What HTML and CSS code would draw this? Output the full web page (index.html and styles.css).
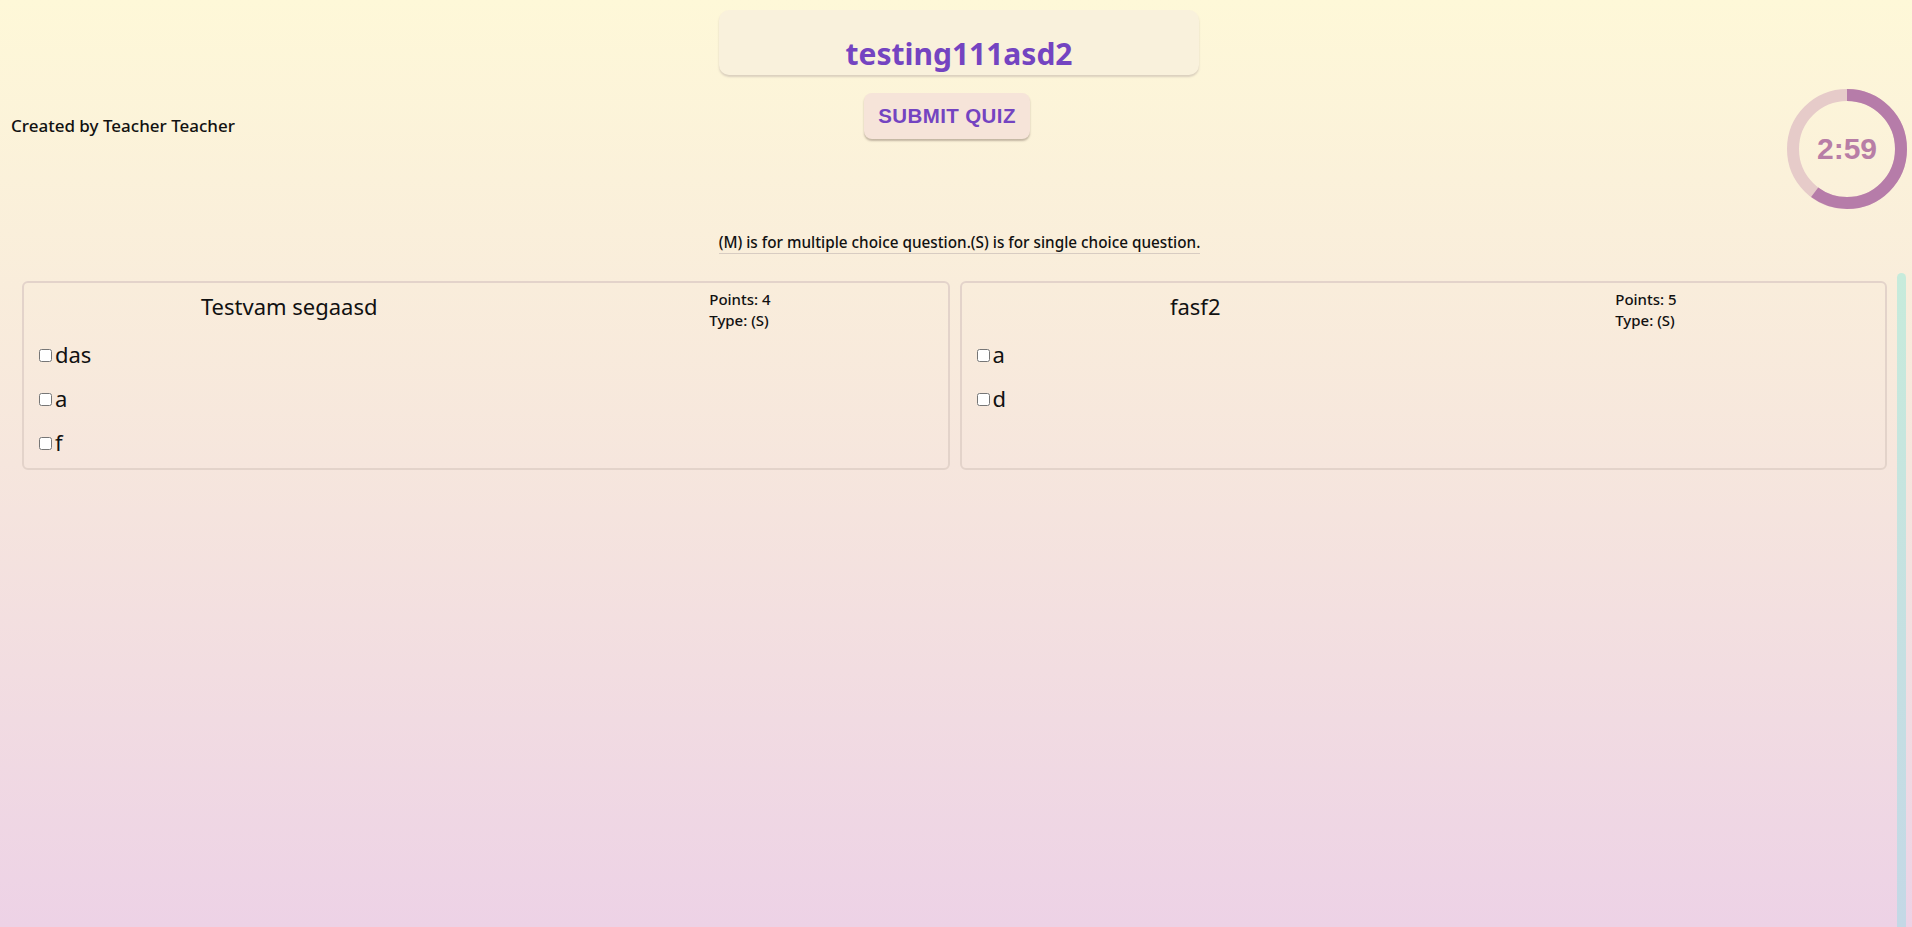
FILE: index.html
```html
<!DOCTYPE html>
<html lang="en">
<head>
<meta charset="utf-8">
<title>Quiz</title>
<link rel="stylesheet" href="styles.css">
</head>
<body>
<header class="top">
  <div class="author">Created by Teacher Teacher</div>
  <div class="center">
    <div class="title-box"><h1 class="title">testing111asd2</h1></div>
    <button class="submit">SUBMIT QUIZ</button>
  </div>
  <div class="timer">
    <svg class="ring" width="120" height="120" viewBox="0 0 120 120">
      <circle cx="60" cy="60" r="54" fill="none" stroke="#e6cbc9" stroke-width="12"/>
      <circle cx="60" cy="60" r="54" fill="none" stroke="#b67ca9" stroke-width="12" stroke-dasharray="204 340" transform="rotate(-90 60 60)"/>
    </svg>
    <span class="time">2:59</span>
  </div>
</header>
<p class="legend"><span class="legend-text">(M) is for multiple choice question.(S) is for single choice question.</span></p>
<main class="questions-wrap">
  <div class="questions">
    <section class="card">
      <div class="card-head">
        <div class="q-title">Testvam segaasd</div>
        <div class="q-meta"><div>Points: 4</div><div>Type: (S)</div></div>
      </div>
      <label class="option"><input type="checkbox">das</label>
      <label class="option"><input type="checkbox">a</label>
      <label class="option"><input type="checkbox">f</label>
    </section>
    <section class="card">
      <div class="card-head">
        <div class="q-title">fasf2</div>
        <div class="q-meta"><div>Points: 5</div><div>Type: (S)</div></div>
      </div>
      <label class="option"><input type="checkbox">a</label>
      <label class="option"><input type="checkbox">d</label>
    </section>
  </div>
  <div class="scroll-bar"></div>
</main>
</body>
</html>
```
FILE: styles.css
```css
html, body {
  margin: 0;
  padding: 0;
}
body {
  min-height: 927px;
  background: linear-gradient(180deg, #fef8d8 0%, #f6e6dd 50%, #edd2e6 100%);
  font-family: "Noto Sans", "Open Sans", sans-serif;
  color: #111;
  overflow: hidden;
}
.top {
  display: grid;
  grid-template-columns: 1fr auto 1fr;
  align-items: start;
}
.author {
  margin: 113px 0 0 11px;
  font-size: 17px;
  font-weight: 500;
  line-height: 26px;
}
.center {
  display: flex;
  flex-direction: column;
  align-items: center;
  margin-left: 6px;
}
.title-box {
  margin-top: 10px;
  width: 480px;
  height: 65px;
  background: #f9f1dc;
  border-radius: 10px;
  box-shadow: 0 2px 2px rgba(120, 100, 110, 0.25);
  text-align: center;
}
.title {
  margin: 0;
  padding-top: 26px;
  font-size: 30px;
  line-height: 35px;
  font-weight: 700;
  color: #7444c1;
}
.submit {
  margin: 18px 24px 0 0;
  width: 166px;
  height: 46px;
  border: none;
  border-radius: 8px;
  background: #f6e4d9;
  box-shadow: 0 2px 2px rgba(90, 70, 60, 0.35);
  font-family: "Liberation Sans", Arial, sans-serif;
  font-weight: 700;
  font-size: 20.5px;
  letter-spacing: 0.4px;
  color: #7444c1;
  padding: 0;
}
.timer {
  justify-self: end;
  margin: 89px 5px 0 0;
  width: 120px;
  height: 120px;
  display: grid;
  place-items: center;
}
.ring, .time {
  grid-area: 1 / 1;
}
.time {
  font-family: "Liberation Sans", Arial, sans-serif;
  font-weight: 700;
  font-size: 30px;
  color: #b87ea6;
}
.legend {
  margin: 23px 0 0 7px;
  text-align: center;
  font-size: 15.3px;
  line-height: 21px;
  font-weight: 500;
}
.legend-text {
  display: inline-block;
  border-bottom: 1px solid #d8ccc2;
}
.questions-wrap {
  display: flex;
  margin-top: 19px;
  height: 654px;
}
.questions {
  flex: 1;
  display: grid;
  grid-template-columns: 1fr 1fr;
  column-gap: 10px;
  align-items: start;
  padding: 8px 10px 0 22px;
}
.card {
  box-sizing: border-box;
  height: 189px;
  border: 2px solid #e3d3ca;
  border-radius: 6px;
  padding: 6px 11px 9px;
}
.card-head {
  display: flex;
  justify-content: space-around;
  align-items: flex-start;
}
.q-title {
  font-size: 22px;
  line-height: 30px;
  margin-top: 2px;
}
.q-meta {
  font-size: 15px;
  line-height: 21px;
  font-weight: 500;
}
.option {
  display: flex;
  align-items: center;
  height: 30px;
  margin-top: 14px;
  font-size: 22px;
  line-height: 30px;
}
.card-head + .option {
  margin-top: 8px;
}
.option input {
  width: 13px;
  height: 13px;
  margin: 5px 3px 3px 4px;
}
.scroll-bar {
  width: 9px;
  margin-right: 6px;
  border-radius: 5px 5px 0 0;
  background: linear-gradient(180deg, #c7ebdb 0%, #c5dfe2 60%, #c4d8e6 100%);
}
```
